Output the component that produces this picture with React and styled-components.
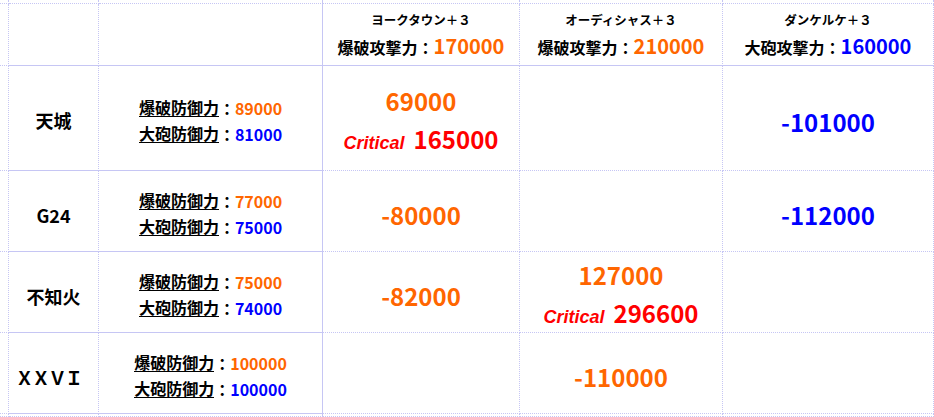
import styled, { createGlobalStyle } from "styled-components";

const GlobalStyle = createGlobalStyle`
  html, body {
    margin: 0;
    padding: 0;
    background: #fff;
  }
  body {
    font-family: "Noto Sans CJK JP", "Noto Sans", sans-serif;
    color: #000;
  }
`;

const LINE = "#c6c6f4";
const ORANGE = "#ff6600";
const BLUE = "#0000ff";
const RED = "#ff0000";

const Sheet = styled.div`
  display: grid;
  grid-template-columns: 9px 90px 224px 197px 203px 1fr;
  grid-template-rows: 4px 62px 105px 81px 81px 81px 1fr;
  width: 934px;
  height: 417px;
  overflow: hidden;
`;

const Cell = styled.div`
  box-sizing: border-box;
  border-right: 1px ${(p) => p.$right || "dotted"} ${LINE};
  border-bottom: 1px ${(p) => p.$bottom || "dotted"} ${LINE};
  display: flex;
  flex-direction: column;
  align-items: center;
  justify-content: center;
  padding-top: ${(p) => p.$shift || 0}px;
  gap: ${(p) => p.$gap || 0}px;
  font-weight: 700;
  white-space: nowrap;
`;

const ShipName = styled.div`
  font-size: 12.5px;
  line-height: 16px;
`;

const StatLine = styled.div`
  display: flex;
  align-items: baseline;
  font-size: 16px;
  line-height: 26px;
`;

const Num = styled.span`
  color: ${(p) => p.$color};
  font-size: ${(p) => p.$size || 16}px;
`;

const Name = styled.div`
  font-size: 18px;
  letter-spacing: ${(p) => p.$spacing || 0}px;
  margin-right: ${(p) => p.$pull || 0}px;
`;

const DefLine = styled.div`
  display: flex;
  align-items: center;
  font-size: 16px;
  line-height: 20px;
`;

const DefLabel = styled.span`
  display: inline-block;
  line-height: 18px;
  border-bottom: 1.5px solid #000;
`;

const Big = styled.div`
  display: flex;
  align-items: baseline;
  gap: 9px;
  font-size: 24px;
  line-height: 30px;
  color: ${(p) => p.$color};
`;

const Crit = styled.span`
  font-family: "Liberation Sans", Arial, sans-serif;
  font-style: italic;
  font-size: 18px;
  color: ${RED};
`;

const attackers = [
  { name: "ヨークタウン＋３", label: "爆破攻撃力", value: "170000", color: ORANGE },
  { name: "オーディシャス＋３", label: "爆破攻撃力", value: "210000", color: ORANGE },
  { name: "ダンケルケ＋３", label: "大砲攻撃力", value: "160000", color: BLUE },
];

const defenders = [
  {
    name: "天城",
    nameShift: 4,
    blast: "89000",
    gun: "81000",
    results: [
      { value: "69000", color: ORANGE, crit: "165000" },
      null,
      { value: "-101000", color: BLUE },
    ],
  },
  {
    name: "G24",
    blast: "77000",
    gun: "75000",
    results: [{ value: "-80000", color: ORANGE }, null, { value: "-112000", color: BLUE }],
  },
  {
    name: "不知火",
    blast: "75000",
    gun: "74000",
    results: [
      { value: "-82000", color: ORANGE },
      { value: "127000", color: ORANGE, crit: "296600" },
      null,
    ],
  },
  {
    name: "ＸＸＶＩ",
    spacing: -1.5,
    pull: 10,
    blast: "100000",
    gun: "100000",
    results: [null, { value: "-110000", color: ORANGE }, null],
  },
];

const Result = ({ result }) => {
  if (!result) return null;
  return (
    <>
      <Big $color={result.color}>{result.value}</Big>
      {result.crit && (
        <Big $color={RED}>
          <Crit>Critical</Crit>
          <span>{result.crit}</span>
        </Big>
      )}
    </>
  );
};

const App = () => {
  return (
    <>
      <GlobalStyle />
      <Sheet>
        {/* top sliver row */}
        <Cell />
        <Cell />
        <Cell $right="solid" />
        <Cell />
        <Cell />
        <Cell />

        {/* header row */}
        <Cell />
        <Cell $bottom="solid" />
        <Cell $bottom="solid" $right="solid" />
        {attackers.map((a) => (
          <Cell key={a.name} $bottom="solid" $shift={2} $gap={5}>
            <ShipName>{a.name}</ShipName>
            <StatLine>
              {a.label}：<Num $color={a.color} $size={20}>{a.value}</Num>
            </StatLine>
          </Cell>
        ))}

        {defenders.map((d) => (
          <>
            <Cell key={d.name + "-edge"} />
            <Cell $bottom="solid" $shift={d.nameShift ?? 8}>
              <Name $spacing={d.spacing} $pull={d.pull}>
                {d.name}
              </Name>
            </Cell>
            <Cell $bottom="solid" $right="solid" $shift={5} $gap={6}>
              <DefLine>
                <DefLabel>爆破防御力</DefLabel>：<Num $color={ORANGE}>{d.blast}</Num>
              </DefLine>
              <DefLine>
                <DefLabel>大砲防御力</DefLabel>：<Num $color={BLUE}>{d.gun}</Num>
              </DefLine>
            </Cell>
            {d.results.map((r, i) => (
              <Cell key={d.name + i} $shift={8} $gap={8}>
                <Result result={r} />
              </Cell>
            ))}
          </>
        ))}

        {/* bottom sliver row */}
        <Cell />
        <Cell />
        <Cell $right="solid" />
        <Cell />
        <Cell />
        <Cell />
      </Sheet>
    </>
  );
};

export default App;
